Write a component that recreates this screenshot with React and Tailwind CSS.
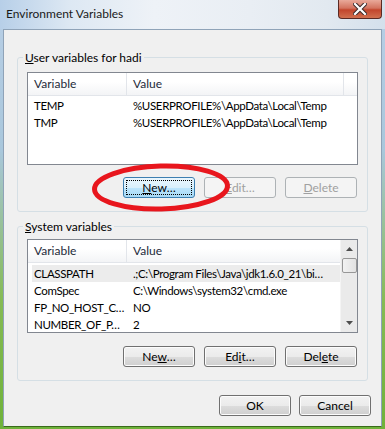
import React from 'react';

const userVars = [
  { name: 'TEMP', value: '%USERPROFILE%\\AppData\\Local\\Temp' },
  { name: 'TMP', value: '%USERPROFILE%\\AppData\\Local\\Temp' },
];

const systemVars = [
  { name: 'CLASSPATH', value: '.;C:\\Program Files\\Java\\jdk1.6.0_21\\bi…', selected: true },
  { name: 'ComSpec', value: 'C:\\Windows\\system32\\cmd.exe' },
  { name: 'FP_NO_HOST_C…', value: 'NO' },
  { name: 'NUMBER_OF_P…', value: '2' },
];

const Button = ({ children, disabled, focused, className = '' }) => {
  if (disabled) {
    return (
      <div className={`w-[72px] h-[21px] rounded-[3px] border border-[#adb2b5] bg-[#f4f4f4] flex items-center justify-center text-[#a0a0a0] ${className}`}>
        {children}
      </div>
    );
  }
  if (focused) {
    return (
      <div className={`w-[72px] h-[21px] rounded-[3px] border border-[#3c7fb1] bg-[linear-gradient(#eaf6fd_0%,#d9f0fc_50%,#bee6fd_50%,#a7d9f5_100%)] p-[2px] ${className}`}>
        <div className="w-full h-full border border-dotted border-black flex items-center justify-center text-black">
          {children}
        </div>
      </div>
    );
  }
  return (
    <div className={`w-[72px] h-[21px] rounded-[3px] border border-[#707070] bg-[linear-gradient(#f2f2f2_0%,#ebebeb_50%,#dddddd_50%,#cfcfcf_100%)] shadow-[inset_0_0_0_1px_#fcfcfc] flex items-center justify-center text-black ${className}`}>
      {children}
    </div>
  );
};

const Header = ({ full }) => (
  <div className="flex h-[23px] bg-[linear-gradient(#ffffff_0%,#ffffff_40%,#f3f4f6_100%)] border-b border-[#e2e5ea] text-[#1e2a3a]">
    <div className="w-[99px] shrink-0 pl-[6px] flex items-center border-r border-[#e2e5ea]">Variable</div>
    <div className="w-[217px] shrink-0 pl-[6px] flex items-center border-r border-[#e2e5ea]">Value</div>
    {full && <div className="flex-1" />}
  </div>
);

const Row = ({ name, value, selected }) => (
  <div className={`flex h-[17px] items-center ml-[4px] w-[312px] overflow-hidden text-[11.5px] tracking-[-0.35px] ${selected ? 'bg-[#ececec]' : ''}`}>
    <div className="w-[99px] shrink-0 pl-[2px] whitespace-nowrap overflow-hidden">{name}</div>
    <div className="pl-[2px] whitespace-nowrap">{value}</div>
  </div>
);

const GroupBox = ({ label, children, className = '' }) => (
  <div className={`relative mx-[13px] rounded-[3px] border border-[#d5dfe5] ${className}`}>
    <div className="absolute left-[5px] -top-[8px] px-[2px] bg-[#f0f0f0] leading-[15px]">{label}</div>
    {children}
  </div>
);

export default function App() {
  return (
    <div
      className="relative w-[385px] h-[429px] overflow-hidden bg-[linear-gradient(180deg,#b9cfe6_0%,#a9c7dc_35%,#86bb55_70%,#6fb23a_100%)] text-[12px] text-black"
      style={{ fontFamily: 'Lato, "Liberation Sans", Arial, sans-serif' }}
    >
      {/* title bar */}
      <div className="h-[29px] flex items-center pl-[6px] pb-[1px] bg-[linear-gradient(90deg,#b7cfe8_0%,#dde8f3_18%,#eef2f7_40%,#e9eef4_65%,#e2e9f0_85%,#d4e0ec_100%)]">
        <span className="text-[#1a1a1a]">Environment Variables</span>
      </div>
      <div className="absolute top-0 left-[338px] w-[44px] h-[19px] rounded-b-[4px] border border-t-0 border-[#5a2a24] bg-[linear-gradient(#e9a99a_0%,#d3735f_45%,#c2452c_55%,#d1704f_100%)] flex items-center justify-center">
        <svg width="14" height="12" viewBox="0 0 14 12">
          <path d="M2 1 L12 11 M12 1 L2 11" stroke="#3b2a2a" strokeWidth="4.2" strokeLinecap="square" />
          <path d="M2 1 L12 11 M12 1 L2 11" stroke="#ffffff" strokeWidth="2.2" strokeLinecap="square" />
        </svg>
      </div>

      {/* client area */}
      <div className="mx-[3px] h-[398px] border border-[#8fa3b8] border-b-[#3a6a1c] bg-[#f0f0f0] pt-[27px]">
        <GroupBox label={<span><span className="underline">U</span>ser variables for hadi</span>} className="h-[155px]">
          <div className="mt-[14px] mx-[9px] h-[93px] border border-[#828790] bg-white">
            <Header full />
            <div className="pt-[1px]">
              {userVars.map((v) => (
                <Row key={v.name} {...v} />
              ))}
            </div>
          </div>
          <div className="flex justify-end gap-[9px] mr-[10px] mt-[12px]">
            <Button focused>
              <span><span className="underline">N</span>ew…</span>
            </Button>
            <Button disabled>
              <span><span className="underline">E</span>dit…</span>
            </Button>
            <Button disabled>
              <span><span className="underline">D</span>elete</span>
            </Button>
          </div>
        </GroupBox>

        <GroupBox label={<span><span className="underline">S</span>ystem variables</span>} className="h-[155px] mt-[14px]">
          <div className="mt-[12px] mx-[9px] h-[94px] border border-[#828790] bg-white flex">
            <div className="flex-1 overflow-hidden">
              <Header />
              <div className="pt-[2px]">
                {systemVars.map((v) => (
                  <Row key={v.name} {...v} />
                ))}
              </div>
            </div>
            <div className="w-[17px] shrink-0 bg-[#eaeaea] border-l border-[#f4f4f4] flex flex-col items-center">
              <div className="h-[18px] flex items-center justify-center">
                <svg width="7" height="4" viewBox="0 0 7 4"><path d="M0 4 L3.5 0 L7 4 Z" fill="#4d4d4d" /></svg>
              </div>
              <div className="w-[15px] h-[15px] rounded-[2px] border border-[#979797] bg-[linear-gradient(90deg,#f2f2f2,#e2e2e2)]" />
              <div className="flex-1" />
              <div className="h-[18px] flex items-center justify-center">
                <svg width="7" height="4" viewBox="0 0 7 4"><path d="M0 0 L3.5 4 L7 0 Z" fill="#4d4d4d" /></svg>
              </div>
            </div>
          </div>
          <div className="flex justify-end gap-[9px] mr-[10px] mt-[13px]">
            <Button>
              <span>Ne<span className="underline">w</span>…</span>
            </Button>
            <Button>
              <span>Ed<span className="underline">i</span>t…</span>
            </Button>
            <Button>
              <span>Del<span className="underline">e</span>te</span>
            </Button>
          </div>
        </GroupBox>

        <div className="flex justify-end gap-[8px] mr-[10px] mt-[14px]">
          <Button>OK</Button>
          <Button>Cancel</Button>
        </div>
      </div>

      {/* red hand-drawn circle */}
      <svg className="absolute left-[89px] top-[161px] pointer-events-none" width="145" height="54" viewBox="0 0 145 54">
        <ellipse cx="72" cy="26.5" rx="66.5" ry="21.5" fill="none" stroke="#e8161d" strokeWidth="5" transform="rotate(-1.5 72 26.5)" />
      </svg>
    </div>
  );
}
